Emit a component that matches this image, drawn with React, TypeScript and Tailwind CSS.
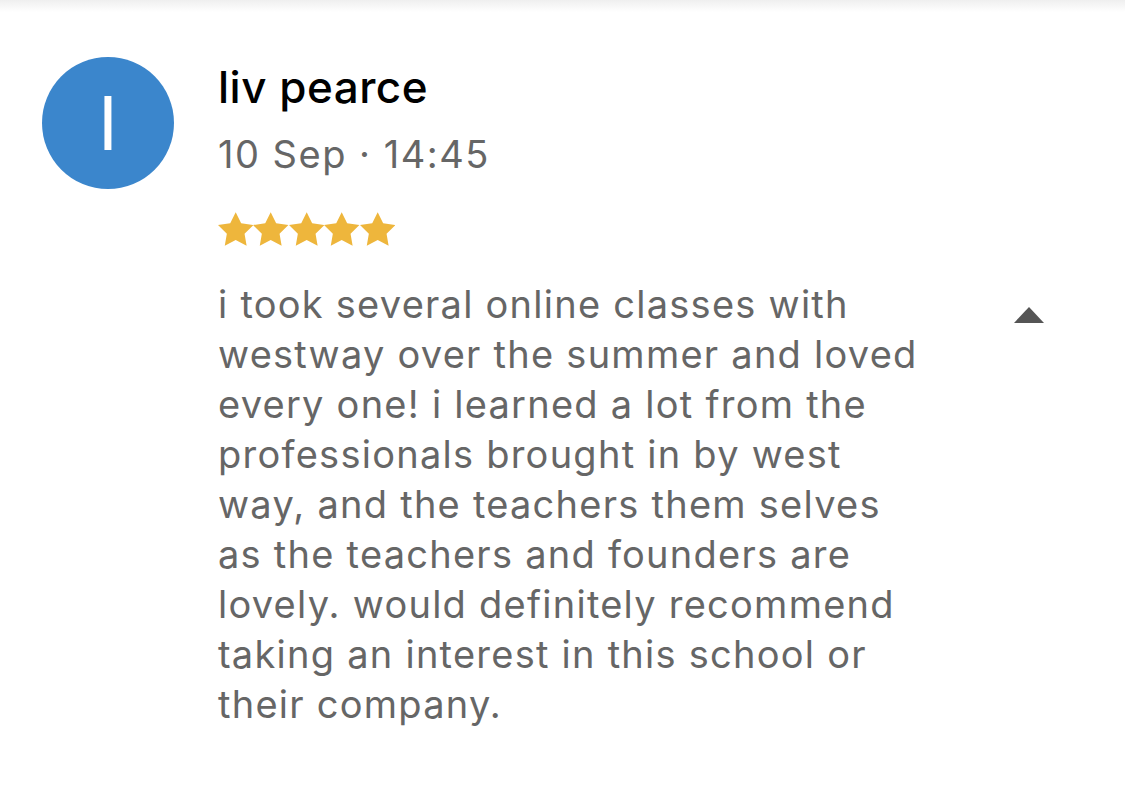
const lines = [
  'i took several online classes with',
  'westway over the summer and loved',
  'every one! i learned a lot from the',
  'professionals brought in by west',
  'way, and the teachers them selves',
  'as the teachers and founders are',
  'lovely. would definitely recommend',
  'taking an interest in this school or',
  'their company.',
]

function Star() {
  return (
    <svg width="35.4" height="34" viewBox="2 2 20 19.02" className="block">
      <polygon
        points="12,2 15.09,8.26 22,9.27 17,14.14 18.18,21.02 12,17.77 5.82,21.02 7,14.14 2,9.27 8.91,8.26"
        fill="#eeb63c"
      />
    </svg>
  )
}

export default function App() {
  return (
    <div className="w-[1125px] h-[795px] bg-white overflow-hidden" style={{ fontFamily: 'Inter, "Noto Sans", sans-serif' }}>
      <div className="h-[12px] bg-gradient-to-b from-[#efefef] to-white" />
      <div className="flex pl-[42px] pt-[45px] pr-[81px]">
        <div className="w-[132px] h-[132px] rounded-full bg-[#3b86cc] flex items-center justify-center shrink-0">
          <span className="text-white text-[74px] leading-none font-normal">I</span>
        </div>
        <div className="ml-[44px] flex-1 min-w-0">
          <div className="mt-[4px] text-[44px] leading-[52px] tracking-[0.5px] font-medium text-black">liv pearce</div>
          <div className="mt-[17px] text-[38px] leading-[48px] tracking-[1.5px] text-[#666666]">10 Sep · 14:45</div>
          <div className="mt-[34px] flex">
            {[0, 1, 2, 3, 4].map((i) => (
              <Star key={i} />
            ))}
          </div>
          <div className="mt-[33px] flex">
            <div className="flex-1 text-[38px] leading-[50px] tracking-[1.25px] text-[#666666]">
              {lines.map((l) => (
                <div key={l} className="whitespace-nowrap">{l}</div>
              ))}
            </div>
            <svg width="30" height="16" viewBox="0 0 30 16" className="mt-[28px] shrink-0">
              <polygon points="15,0 30,16 0,16" fill="#555555" />
            </svg>
          </div>
        </div>
      </div>
    </div>
  )
}
